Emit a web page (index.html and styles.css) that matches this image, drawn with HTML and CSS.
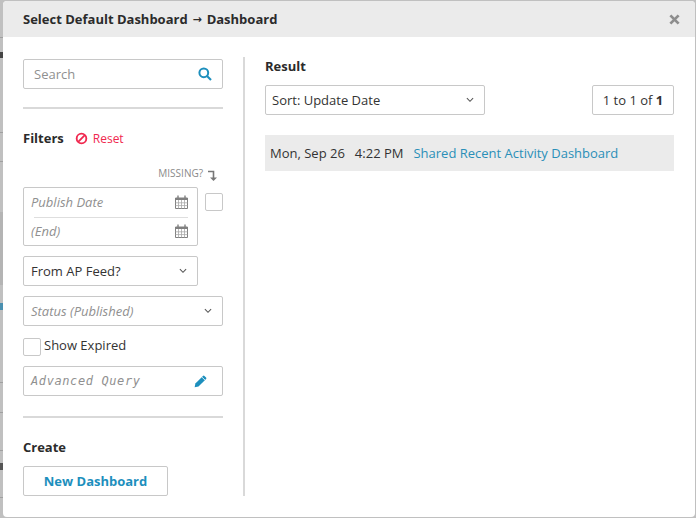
FILE: index.html
```html
<html lang="en">
<head>
    <meta charset="UTF-8" />
    <title>Select Default Dashboard</title>
    <link rel="stylesheet" href="styles.css">
</head>
<body>
    <div class="backdrop">
      <div class="modal">
        <div class="modal-head">
          <h1>Select Default Dashboard <span class="arrow">&#8594;</span> Dashboard</h1>
          <svg class="close" viewBox="0 0 12 12" width="11" height="11"><path d="M1.5 1.5l9 9M10.5 1.5l-9 9" stroke="#8e8e8e" stroke-width="3" fill="none"/></svg>
        </div>
        <div class="modal-body">
          <div class="filters">
            <div class="field search">
              <span class="placeholder plain">Search</span>
              <svg viewBox="0 0 14 14" width="14" height="14"><circle cx="5.8" cy="5.8" r="4.4" fill="none" stroke="#1d8fbd" stroke-width="2"/><path d="M9 9l4 4" stroke="#1d8fbd" stroke-width="2.2"/></svg>
            </div>
            <hr class="rule">
            <div class="filter-title">
              <h2>Filters</h2>
              <span class="reset">
                <svg viewBox="0 0 14 14" width="13" height="13"><circle cx="7" cy="7" r="5.2" fill="none" stroke="#f0284f" stroke-width="2"/><path d="M3.4 10.6l7.2-7.2" stroke="#f0284f" stroke-width="2"/></svg>
                Reset
              </span>
            </div>
            <div class="missing">
              <span>MISSING?</span>
              <svg viewBox="0 0 10 14" width="10" height="14"><path d="M1 2.5h5.5v7" fill="none" stroke="#777" stroke-width="1.6"/><path d="M3 8.5h7l-3.5 3.5z" fill="#777"/></svg>
            </div>
            <div class="date-row">
              <div class="dates">
                <div class="date-line date-first">
                  <span class="placeholder">Publish Date</span>
                  <svg class="cal" viewBox="0 0 13 14" width="13" height="14"><use href="#calendar"/></svg>
                </div>
                <div class="date-line date-last">
                  <span class="placeholder">(End)</span>
                  <svg class="cal" viewBox="0 0 13 14" width="13" height="14"><use href="#calendar"/></svg>
                </div>
              </div>
              <span class="check"></span>
            </div>
            <div class="field select short">
              <span>From AP Feed?</span>
              <svg class="chev" viewBox="0 0 9 6" width="8" height="6"><path d="M1 1l3.5 3.5L8 1" fill="none" stroke="#555" stroke-width="1.2"/></svg>
            </div>
            <div class="field select">
              <span class="placeholder">Status (Published)</span>
              <svg class="chev" viewBox="0 0 9 6" width="8" height="6"><path d="M1 1l3.5 3.5L8 1" fill="none" stroke="#555" stroke-width="1.2"/></svg>
            </div>
            <label class="expired"><span class="check"></span>Show Expired</label>
            <div class="field query">
              <span class="placeholder mono">Advanced Query</span>
              <svg viewBox="0 0 13 13" width="14" height="14"><path d="M0.6 12.4l0.7-3.6 7-7a1 1 0 0 1 1.4 0l1.5 1.5a1 1 0 0 1 0 1.4l-7 7z" fill="#1d8fbd"/><path d="M7.4 2.9l2.7 2.7" stroke="#fff" stroke-width="0.8"/></svg>
            </div>
            <hr class="rule rule-low">
            <h2 class="create-title">Create</h2>
            <button class="new-btn">New Dashboard</button>
          </div>
          <div class="results">
            <h2>Result</h2>
            <div class="result-bar">
              <div class="field select sort">
                <span>Sort: Update Date</span>
                <svg class="chev" viewBox="0 0 9 6" width="8" height="6"><path d="M1 1l3.5 3.5L8 1" fill="none" stroke="#555" stroke-width="1.2"/></svg>
              </div>
              <div class="pager">1 to 1 of <b>1</b></div>
            </div>
            <div class="result-row">
              <span>Mon, Sep 26</span>
              <span>4:22 PM</span>
              <a href="#">Shared Recent Activity Dashboard</a>
            </div>
          </div>
        </div>
      </div>
    </div>
    <svg class="defs" width="0" height="0">
      <symbol id="calendar" viewBox="0 0 13 14">
        <path d="M0.5 3h12v10.5h-12z" fill="#fff" stroke="#808080"/>
        <path d="M0.5 3h12v2h-12z" fill="#808080"/>
        <path d="M3 0.5v3.5M10 0.5v3.5" stroke="#808080" stroke-width="1.4"/>
        <path d="M3.5 5v8.5M6.5 5v8.5M9.5 5v8.5M0.5 7.8h12M0.5 10.6h12" stroke="#a8a8a8" stroke-width="0.8"/>
      </symbol>
    </svg>
</body>
</html>
```

FILE: styles.css
```css
* {
    box-sizing: border-box;
}

html, body {
    margin: 0;
    height: 100%;
}

body {
    font-family: "Open Sans", sans-serif;
    font-size: 13px;
    color: #333;
    background-color: #c0c0c0;
    overflow: hidden;
}

h1, h2 {
    margin: 0;
    font-size: 13px;
    font-weight: 700;
    color: #2b2b2b;
}

.arrow {
    margin: 0 1.5px;
    font-family: "DejaVu Sans", sans-serif;
    font-size: 11px;
    vertical-align: 1px;
}

.defs {
    display: block;
}

.backdrop {
    padding: 1px 1.5px 1px 3px;
    height: 518px;
    /* the page behind the modal, only a sliver of it shows on the left */
    background-repeat: no-repeat;
    background-size: 3px 100%;
    background-image: linear-gradient(to bottom,
        #c0c0c0 37px, #a0a0a0 37px, #a0a0a0 38px, #c0c0c0 38px,
        #c0c0c0 52px, #444 52px, #444 58px, #c0c0c0 58px,
        #c0c0c0 132px, #a0a0a0 132px, #a0a0a0 133px, #c0c0c0 133px,
        #c0c0c0 161px, #a0a0a0 161px, #a0a0a0 162px, #c0c0c0 162px,
        #c0c0c0 212px, #b4b4b4 212px, #b4b4b4 285px, #c0c0c0 285px,
        #c0c0c0 303px, #4a90b0 303px, #4a90b0 310px, #c0c0c0 310px,
        #c0c0c0 382px, #a0a0a0 382px, #a0a0a0 383px, #c0c0c0 383px,
        #c0c0c0 412px, #a0a0a0 412px, #a0a0a0 413px, #c0c0c0 413px,
        #c0c0c0 450px, #a0a0a0 450px, #a0a0a0 451px, #c0c0c0 451px,
        #c0c0c0 463px, #555 463px, #555 470px, #c0c0c0 470px,
        #c0c0c0 497px, #a0a0a0 497px, #a0a0a0 498px, #c0c0c0 498px);
}

.modal {
    height: 516px;
    background-color: #ffffff;
    border-radius: 4px;
    overflow: hidden;
}

.modal-head {
    height: 36px;
    padding: 0 15px 0 20px;
    display: flex;
    align-items: center;
    justify-content: space-between;
    background-color: #ebebeb;
}

.modal-body {
    display: flex;
    padding-top: 20px;
}

.filters {
    width: 242px;
    height: 439px;
    padding: 2px 20px 0;
    border-right: 2px solid #d9d9d9;
}

.results {
    flex: 1;
    padding: 0 20.5px 0 20px;
}

.field {
    height: 30px;
    display: flex;
    align-items: center;
    justify-content: space-between;
    border: 1px solid #c8c8c8;
    border-radius: 2px;
    background-color: #fff;
}

.search {
    padding: 0 10px 0 10px;
}

.placeholder {
    font-style: italic;
    color: #909090;
}

.plain {
    font-style: normal;
}

.mono {
    font-family: "DejaVu Sans Mono", monospace;
    font-size: 12px;
    letter-spacing: 0.6px;
}

.rule {
    height: 2px;
    margin: 18px 0 0;
    border: none;
    background-color: #d9d9d9;
}

.rule-low {
    margin-top: 20px;
}

.filter-title {
    margin-top: 20px;
    display: flex;
    align-items: center;
    gap: 11px;
}

.reset {
    display: flex;
    align-items: center;
    gap: 5px;
    font-size: 12px;
    color: #f0284f;
}

.missing {
    margin-top: 19px;
    padding-right: 6px;
    height: 21px;
    display: flex;
    justify-content: flex-end;
    gap: 4px;
    font-size: 10px;
    color: #8a8a8a;
}

.missing svg {
    margin-top: 3px;
}

.date-row {
    display: flex;
    gap: 7px;
}

.dates {
    width: 175px;
    height: 59px;
    padding: 0 9px 0 7px;
    border: 1px solid #c8c8c8;
    border-radius: 2px;
}

.date-line {
    height: 28px;
    padding-bottom: 2px;
    display: flex;
    align-items: center;
    justify-content: space-between;
}

.date-first {
    height: 30px;
    border-bottom: 1px solid #dedede;
    margin-left: 3px;
}

.date-first .placeholder {
    margin-left: -3px;
}

.check {
    flex: none;
    width: 18px;
    height: 18px;
    margin-top: 6px;
    border: 1px solid #c8c8c8;
    border-radius: 2px;
    background-color: #fff;
}

.select {
    margin-top: 10px;
    padding: 0 10px 0 7px;
}

.short {
    width: 175px;
}

.expired {
    margin-top: 11px;
    display: flex;
    gap: 3px;
    height: 18px;
    line-height: 16px;
}

.expired .check {
    margin-top: 1px;
}

.query {
    margin-top: 11px;
    padding: 0 14px 0 7px;
}

.create-title {
    margin-top: 20px;
}

.new-btn {
    display: block;
    margin-top: 10px;
    width: 145px;
    height: 30px;
    padding: 0;
    border: 1px solid #c8c8c8;
    border-radius: 2px;
    background-color: #fff;
    color: #1d8fbd;
    font-family: inherit;
    font-size: 13px;
    font-weight: 700;
}

.result-bar {
    margin-top: 10px;
    display: flex;
    justify-content: space-between;
}

.sort {
    margin-top: 0;
    width: 220px;
    padding: 0 10px 0 6px;
}

.pager {
    width: 82px;
    height: 30px;
    line-height: 28px;
    text-align: center;
    border: 1px solid #c8c8c8;
    border-radius: 2px;
}

.result-row {
    margin-top: 20px;
    height: 36px;
    padding: 0 5px;
    display: flex;
    align-items: center;
    gap: 10px;
    background-color: #ebebeb;
}

.result-row a {
    color: #2a8fb8;
    text-decoration: none;
}
```
